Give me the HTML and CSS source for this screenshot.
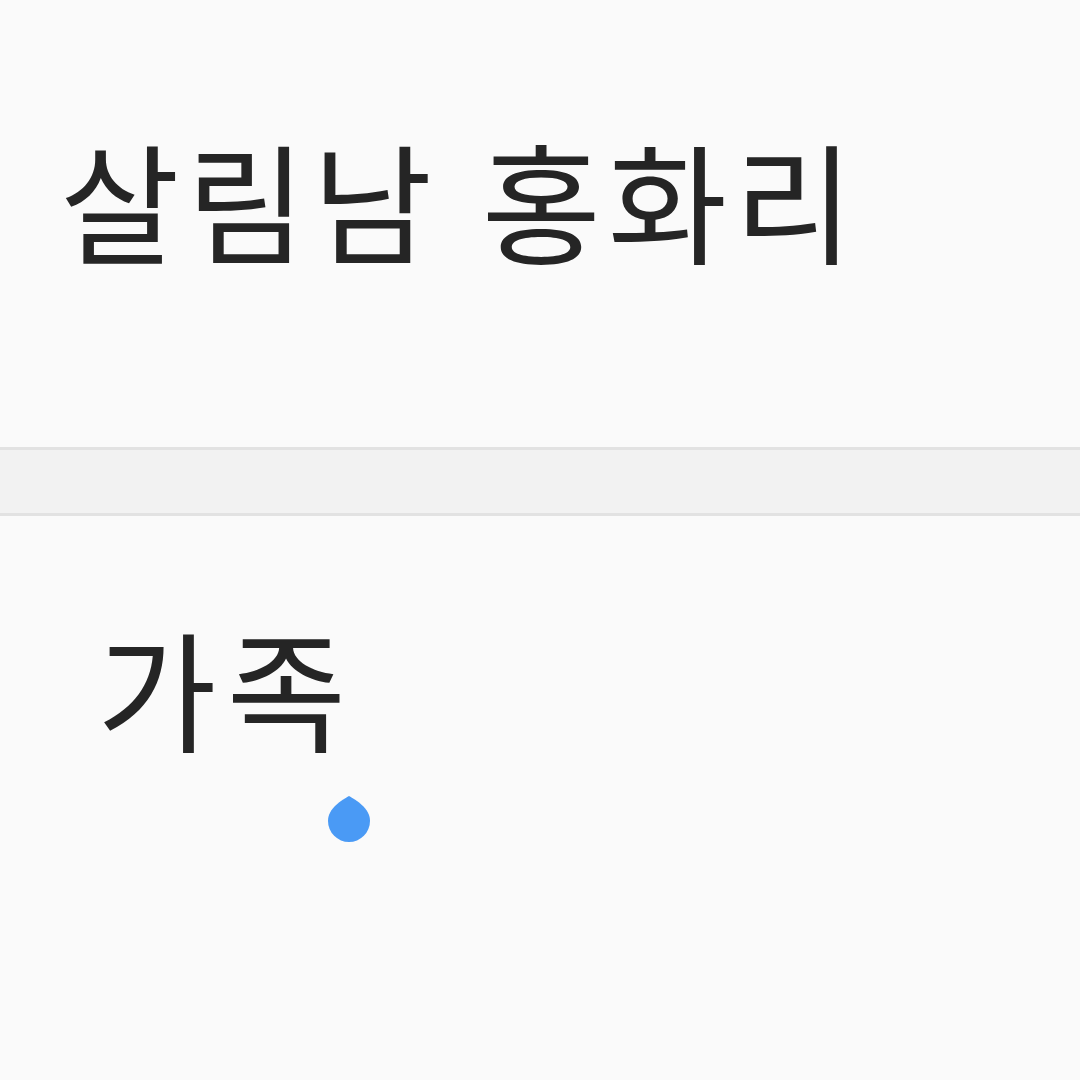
FILE: index.html
```html
<!DOCTYPE html>
<html lang="ko">
<head>
<meta charset="utf-8">
<link rel="stylesheet" href="styles.css">
</head>
<body>
<div class="screen">
  <section class="title-block">
    <h1 class="title">살림남 홍화리</h1>
  </section>
  <div class="divider"></div>
  <section class="edit-block">
    <div class="field">
      <span class="field-text">가족</span><span class="caret-anchor"><svg class="handle" width="44" height="48" viewBox="0 0 44 48"><path d="M22 1 C15 5 1 13 1 26 A21 21 0 0 0 43 26 C43 13 29 5 22 1 Z" fill="#4a9af5"/></svg></span>
    </div>
  </section>
</div>
</body>
</html>
```
FILE: styles.css
```css
html, body {
  margin: 0;
  padding: 0;
  background: #fafafa;
}
.screen {
  width: 1080px;
  height: 1080px;
  display: flex;
  flex-direction: column;
  font-family: "Noto Sans CJK KR", "Noto Sans", sans-serif;
  color: #252525;
}
.title-block {
  height: 447px;
  box-sizing: border-box;
  padding: 97px 0 0 60px;
}
.title {
  margin: 0;
  font-size: 130px;
  font-weight: 400;
  line-height: 200px;
  letter-spacing: 6.6px;
}
.divider {
  height: 69px;
  box-sizing: border-box;
  background: #f2f2f2;
  border-top: 3px solid #e2e2e2;
  border-bottom: 3px solid #e2e2e2;
}
.edit-block {
  flex: 1;
  padding: 69px 0 0 97px;
}
.field {
  font-size: 130px;
  line-height: 200px;
  letter-spacing: 10px;
}
.field-text {
  display: inline-block;
}
.caret-anchor {
  position: relative;
  display: inline-block;
  width: 0;
  height: 0;
}
.handle {
  position: absolute;
  left: -29px;
  top: 53px;
}
```
